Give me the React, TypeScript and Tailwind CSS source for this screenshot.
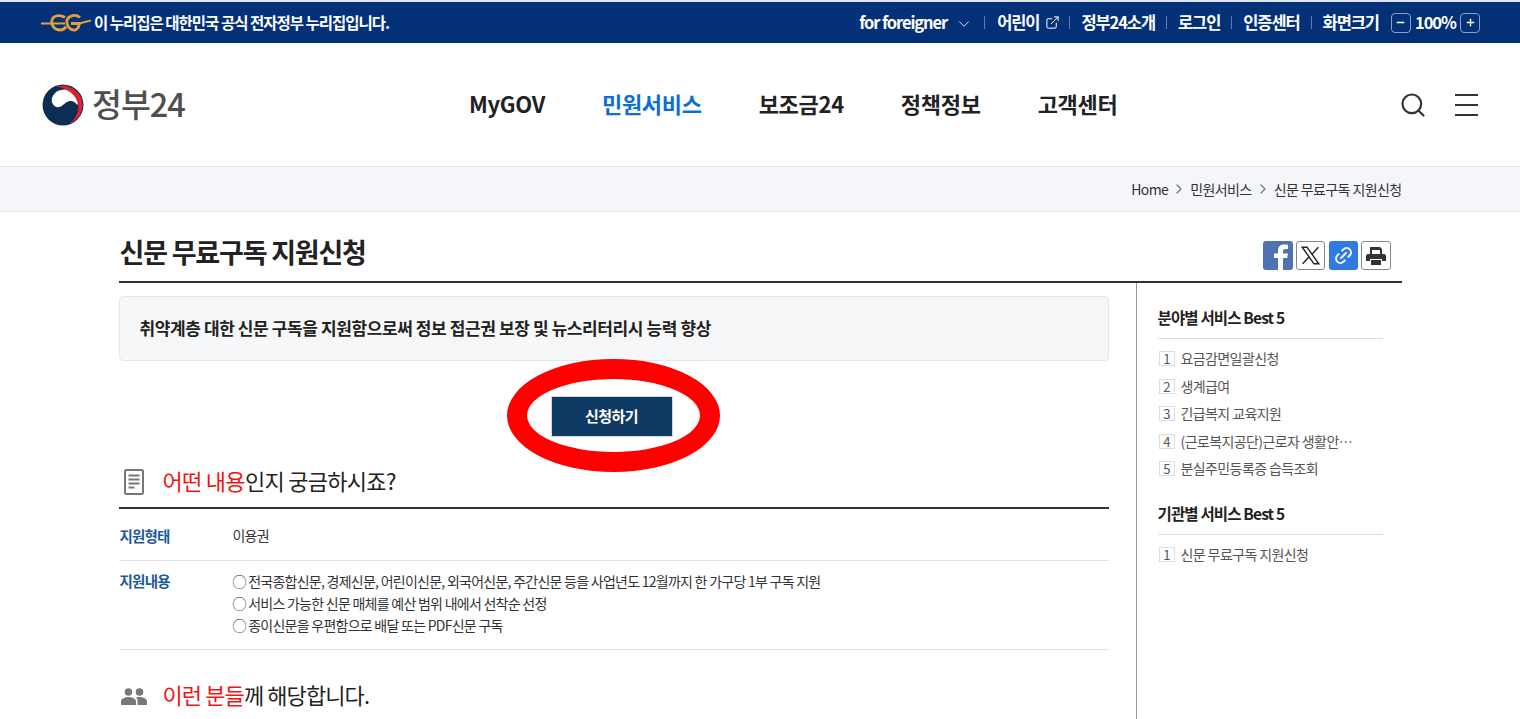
import React from 'react';
import { ChevronDown, ChevronRight, ExternalLink, Search, Link2, Minus, Plus } from 'lucide-react';

const font = 'font-["Noto_Sans_CJK_KR","Noto_Sans",sans-serif]';

const EgLogo = () => (
  <svg width="50" height="18" viewBox="0 0 50 18" fill="none" stroke="#e0a03a" strokeWidth="2.8">
    <path d="M0 9.5 H24" strokeWidth="2" />
    <path d="M24 3.5 C19 0 12 1.5 11 6 C10 11 13 16 19 16 C22 16 24 14.5 25 12.5" />
    <path d="M39 3.5 C35 0 28 1 26 6 C25 12 29 16.5 34 16 C37 15.5 38 12 38.5 9.5 H30" />
    <path d="M38 9.5 L50 6.5" strokeWidth="2" />
  </svg>
);

const GovLogo = () => (
  <svg width="42" height="42" viewBox="0 0 42 42">
    <circle cx="21" cy="21" r="20.5" fill="#0d2d53" />
    <path d="M12.5 22 C7.5 18 9.5 9.5 17 6.5 C24 4 33 6 36 11.5 C37.5 15 37 18.5 35 21 C33 17 28 15.5 24 18.5 C21 21 17 25.5 12.5 22 Z" fill="#fff" />
    <path d="M14 2.5 C26 -1.5 40.5 7 40.5 21 C40.5 30 35 37.5 27 40 C33 35.5 37 29 36 21 C35 11 25 4 14 2.5 Z" fill="#d8222f" />
  </svg>
);

const Sep = () => <span className="h-[13px] w-px bg-[#5f7cab]" />;

const TopBar = () => (
  <div className="h-[43px] border-t-2 border-t-[#dfe3e8] bg-[#033076] flex items-center justify-between pl-[41px] pr-[40px] text-white text-[16.5px] font-bold tracking-[-1.1px]">
    <div className="flex items-center gap-[3px]">
      <EgLogo />
      <span className="text-[15.5px] tracking-[-1px]">이 누리집은 대한민국 공식 전자정부 누리집입니다.</span>
    </div>
    <div className="flex items-center">
      <span>for foreigner</span>
      <ChevronDown size={18} strokeWidth={1.2} className="ml-[8px] mr-[11px] mt-[2px]" />
      <Sep />
      <span className="ml-3">어린이</span>
      <ExternalLink size={15} strokeWidth={1.6} className="ml-[6px] mr-[9px]" />
      <Sep />
      <span className="mx-[11px]">정부24소개</span>
      <Sep />
      <span className="mx-[11px]">로그인</span>
      <Sep />
      <span className="mx-[11px]">인증센터</span>
      <Sep />
      <span className="ml-[11px] mr-[12px]">화면크기</span>
      <span className="w-[20px] h-[20px] rounded-[4px] border border-[#8ba0c4] flex items-center justify-center"><Minus size={11} strokeWidth={3} /></span>
      <span className="mx-[4px] tracking-[-1px]">100%</span>
      <span className="w-[20px] h-[20px] rounded-[4px] border border-[#8ba0c4] flex items-center justify-center"><Plus size={11} strokeWidth={3} /></span>
    </div>
  </div>
);

const Header = () => (
  <div className="h-[123px] flex items-center pl-[42px] pr-[42px]">
    <div className="flex items-center gap-[8px] w-[427px]">
      <GovLogo />
      <span className="text-[32.5px] font-medium text-[#4f4f4f] tracking-[-1px] leading-none mb-[2px]">정부24</span>
    </div>
    <nav className="flex items-center gap-[57px] text-[22px] font-bold text-[#222] tracking-[-0.3px] mb-[2px]">
      <span>MyGOV</span>
      <span className="text-[#0b6fd6]">민원서비스</span>
      <span>보조금24</span>
      <span>정책정보</span>
      <span>고객센터</span>
    </nav>
    <div className="ml-auto flex items-center gap-[28px] text-[#333]">
      <Search size={28} strokeWidth={1.9} />
      <svg width="23" height="22" viewBox="0 0 23 22" stroke="#333" strokeWidth="2"><path d="M0 1H23M0 11H23M0 21H23" /></svg>
    </div>
  </div>
);

const Breadcrumb = () => (
  <div className="h-[46px] bg-[#f4f6f9] border-y border-[#e4e6ea]">
    <div className="w-[1283px] mx-auto h-full flex items-center justify-end text-[14px] text-[#333] tracking-[-0.6px]">
      <span>Home</span>
      <ChevronRight size={16} strokeWidth={1.8} className="mx-[3px] text-[#777]" />
      <span>민원서비스</span>
      <ChevronRight size={16} strokeWidth={1.8} className="mx-[3px] text-[#777]" />
      <span>신문 무료구독 지원신청</span>
    </div>
  </div>
);

const ShareButtons = () => (
  <div className="flex items-center mr-[11px] mb-[11px]">
    <span className="w-[30px] h-[29px] rounded-[3px] bg-[#4f72b5] flex items-end justify-center overflow-hidden">
      <svg width="17" height="26" viewBox="0 0 17 26" fill="#fff" className="ml-[7px]"><path d="M5 26V14H1V9.5H5V6.5C5 2.5 7.5 0.5 11 0.5C13 0.5 15 0.8 15 0.8V5H12.5C10.7 5 10 6 10 7.3V9.5H15L14.2 14H10V26Z" /></svg>
    </span>
    <span className="ml-[3px] w-[29px] h-[29px] rounded-[3px] border border-[#888] bg-white flex items-center justify-center">
      <svg width="21" height="21" viewBox="0 0 24 24" fill="none" stroke="#222" strokeWidth="1.6"><path d="M2.5 2.5H8L21.5 21.5H16Z" /><path d="M21 2.5L13.5 10.8M10.5 13.5L3 21.5" /></svg>
    </span>
    <span className="ml-[4px] w-[29px] h-[29px] rounded-[3px] bg-[#2f7be6] flex items-center justify-center">
      <Link2 size={21} strokeWidth={2.2} color="#fff" className="-rotate-45" />
    </span>
    <span className="ml-[3px] w-[30px] h-[29px] rounded-[3px] border border-[#888] bg-white flex items-center justify-center">
      <svg width="20" height="18" viewBox="0 0 20 18" fill="#333">
        <path d="M4 0H14L16 2V7H14V3H6V7H4Z" />
        <path d="M2 7H18C19 7 20 8 20 9V14H16V12H4V14H0V9C0 8 1 7 2 7Z" />
        <path d="M5 13H15V18H5Z" />
      </svg>
    </span>
  </div>
);

const DocIcon = () => (
  <svg width="20" height="26" viewBox="0 0 20 26" fill="none" stroke="#777" className="ml-[3px]">
    <rect x="1" y="1" width="18" height="24" rx="1.5" strokeWidth="2" />
    <path d="M4.5 6.5H15.5M4.5 10.5H15.5M4.5 14.5H15.5M4.5 18.5H10.5" strokeWidth="1.8" />
  </svg>
);

const PeopleIcon = () => (
  <svg width="26" height="17" viewBox="0 0 26 17" fill="#777">
    <circle cx="7.5" cy="4" r="3.8" />
    <circle cx="18.5" cy="4" r="3.8" />
    <path d="M0 17V13.5C0 10.5 4 9 7.5 9C11 9 15 10.5 15 13.5V17Z" />
    <path d="M16.5 17V13C16.5 11.5 16 10.3 15 9.4C16 9.1 17.3 9 18.5 9C22 9 26 10.5 26 13.5V17Z" />
  </svg>
);

const SectionTitle = ({ icon, red, rest, tracking }: { icon: React.ReactNode; red: string; rest: string; tracking: string }) => (
  <div className="flex items-center h-[30px]">
    <span className="w-[44px] flex items-center pl-[2px]">{icon}</span>
    <h3 className={`text-[22px] font-normal text-[#222] mb-[3px] ${tracking}`}><span className="text-[#f01414]">{red}</span>{rest}</h3>
  </div>
);

const RankList = ({ title, items }: { title: string; items: string[] }) => (
  <div>
    <h4 className="h-[31px] text-[15.5px] font-bold text-[#222] tracking-[-0.85px] border-b border-[#ddd] leading-[18px]">{title}</h4>
    <ul className="mt-[6px]">
      {items.map((item, i) => (
        <li key={item} className="h-[27.5px] flex items-center text-[14px] text-[#555] tracking-[-0.6px]">
          <span className="ml-[1px] w-[16px] h-[15px] border border-[#ddd] flex items-center justify-center text-[13px] leading-none mr-[6px]">{i + 1}</span>
          <span className="truncate max-w-[175px]">{item}</span>
        </li>
      ))}
    </ul>
  </div>
);

const App: React.FC = () => {
  return (
    <div className={`${font} h-screen overflow-hidden bg-white`}>
      <TopBar />
      <Header />
      <Breadcrumb />
      <div className="w-[1283px] mx-auto">
        <div className="h-[71px] border-b-2 border-[#333] flex items-end justify-between">
          <h2 className="text-[27px] font-bold text-[#222] tracking-[-1.2px] leading-none mb-[16px] ml-[1px]">신문 무료구독 지원신청</h2>
          <ShareButtons />
        </div>
        <div className="flex">
          <main className="w-[990px] pt-[13px]">
            <div className="h-[65px] bg-[#f6f7f9] border border-[#e4e6ea] rounded-[4px] flex items-center pl-[20px] pb-[2px] text-[17px] font-bold text-[#222] tracking-[-0.4px]">
              취약계층 대한 신문 구독을 지원함으로써 정보 접근권 보장 및 뉴스리터리시 능력 향상
            </div>
            <div className="flex justify-center mt-[35px] relative pr-[4px]">
              <span className="absolute left-[388px] top-[-37px] w-[213px] h-[113px] rounded-[50%] border-[20px] border-[#ff0000]" />
              <button className="w-[122px] h-[41px] bg-[#0f3a63] border border-[#d5d8dd] text-white text-[15px] font-bold tracking-[-0.5px]">신청하기</button>
            </div>
            <div className="mt-[30px] pb-[10px] border-b-2 border-[#333]">
              <SectionTitle icon={<DocIcon />} red="어떤 내용" rest="인지 궁금하시죠?" tracking="tracking-[-0.7px]" />
            </div>
            <div className="flex h-[52px] items-center pt-[2px] pl-[1px] border-b border-[#e2e2e2] text-[14px] tracking-[-0.8px]">
              <span className="w-[113px] text-[14.5px] font-bold text-[#1d5a9c]">지원형태</span>
              <span className="text-[#333]">이용권</span>
            </div>
            <div className="flex h-[89px] items-start pt-[9px] pl-[1px] border-b border-[#e2e2e2] text-[14px] tracking-[-0.74px]">
              <span className="w-[113px] text-[14.5px] leading-[22px] font-bold text-[#1d5a9c]">지원내용</span>
              <div className="text-[#333] leading-[22px]">
                <p>◯ 전국종합신문, 경제신문, 어린이신문, 외국어신문, 주간신문 등을 사업년도 12월까지 한 가구당 1부 구독 지원</p>
                <p>◯ 서비스 가능한 신문 매체를 예산 범위 내에서 선착순 선정</p>
                <p>◯ 종이신문을 우편함으로 배달 또는 PDF신문 구독</p>
              </div>
            </div>
            <div className="mt-[31px]">
              <SectionTitle icon={<PeopleIcon />} red="이런 분들" rest="께 해당합니다." tracking="tracking-[-0.9px]" />
            </div>
          </main>
          <aside className="ml-[27px] w-[266px] h-[437px] border-l border-[#999] pl-[21px] pr-[19px] pt-[25px]">
            <RankList title="분야별 서비스 Best 5" items={['요금감면일괄신청', '생계급여', '긴급복지 교육지원', '(근로복지공단)근로자 생활안정자금', '분실주민등록증 습득조회']} />
            <div className="mt-[21px]">
              <RankList title="기관별 서비스 Best 5" items={['신문 무료구독 지원신청']} />
            </div>
          </aside>
        </div>
      </div>
    </div>
  );
};

export default App;
